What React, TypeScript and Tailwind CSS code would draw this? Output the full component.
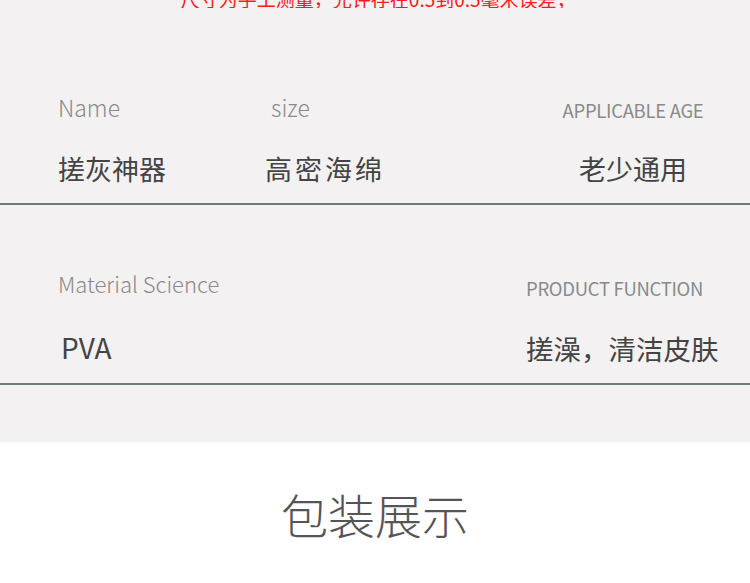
const cjk = "font-['Noto_Sans_CJK_SC',sans-serif]";

export default function App() {
  return (
    <div className={`w-[750px] h-[583px] overflow-hidden bg-white ${cjk}`}>
      {/* spec panel */}
      <div className="h-[442px] bg-[#f3f1f2] flex flex-col">
        {/* clipped note from previous block */}
        <div className="h-[8px] overflow-hidden">
          <p className="mt-[-11px] pl-[172px] text-[19px] leading-none text-[#ff1a1a] whitespace-nowrap">
            *尺寸为手工测量，允许存在0.5到0.5毫米误差；
          </p>
        </div>

        {/* row 1 */}
        <div className="h-[197px] flex border-b-2 border-[#707a78]">
          <div className="w-[207px] ml-[58px] pt-[88px] flex flex-col">
            <span className="text-[23px] leading-none font-light text-[#8a8a8a]">Name</span>
            <span className="mt-[36px] text-[27px] leading-none text-[#444]">搓灰神器</span>
          </div>
          <div className="w-[288px] pt-[88px] flex flex-col">
            <span className="pl-[6px] text-[23px] leading-none font-light text-[#8a8a8a]">size</span>
            <span className="mt-[36px] text-[27px] leading-none tracking-[3px] text-[#444]">高密海绵</span>
          </div>
          <div className="w-[160px] pt-[93px] flex flex-col items-center">
            <span className="text-[18.5px] leading-none text-[#8a8a8a] tracking-[-0.3px]">APPLICABLE AGE</span>
            <span className="mt-[35px] text-[27px] leading-none text-[#444]">老少通用</span>
          </div>
        </div>

        {/* row 2 */}
        <div className="h-[180px] flex border-b-2 border-[#707a78]">
          <div className="w-[468px] ml-[58px] pt-[67px] flex flex-col">
            <span className="text-[22px] leading-none font-light text-[#8a8a8a]">Material Science</span>
            <span className="mt-[39px] pl-[3px] text-[28px] leading-none text-[#444]">PVA</span>
          </div>
          <div className="pt-[74px] flex flex-col">
            <span className="text-[18.5px] leading-none text-[#8a8a8a] tracking-[-0.3px]">PRODUCT FUNCTION</span>
            <span className="mt-[37px] text-[27.5px] leading-none text-[#444]">搓澡，清洁皮肤</span>
          </div>
        </div>
      </div>

      {/* section title */}
      <div className="pt-[48px] flex justify-center">
        <h2 className="text-[47px] leading-none font-light text-[#555]">包装展示</h2>
      </div>
    </div>
  );
}
